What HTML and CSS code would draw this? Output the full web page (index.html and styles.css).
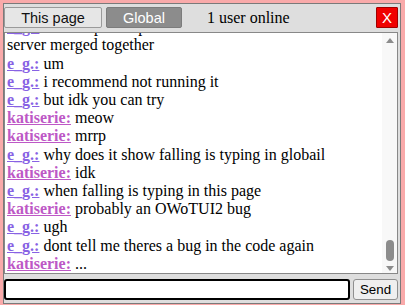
FILE: index.html
```html
<!DOCTYPE html>
<html lang="en">
<head>
    <meta charset="UTF-8">
    <title>Chat</title>
    <link rel="stylesheet" href="styles.css">
</head>
<body>

    <!-- Chat Window -->
    <div id="chat-window">
        <div id="chat-top-bar">
            <button class="tab-btn">This page</button>
            <button class="tab-btn active">Global</button>
            <span id="user-count">1 user online</span>
            <button id="chat-close">X</button>
        </div>
        <div id="chat-log">
            <div class="log-view">
                <div class="log-inner">
                    <div class="msg"><a class="nick nick-eg">e_g.:</a> mot of ip's scripts that he sent in the owot discored server merged together</div>
                    <div class="msg"><a class="nick nick-eg">e_g.:</a> um</div>
                    <div class="msg"><a class="nick nick-eg">e_g.:</a> i recommend not running it</div>
                    <div class="msg"><a class="nick nick-eg">e_g.:</a> but idk you can try</div>
                    <div class="msg"><a class="nick nick-kat">katiserie:</a> meow</div>
                    <div class="msg"><a class="nick nick-kat">katiserie:</a> mrrp</div>
                    <div class="msg"><a class="nick nick-eg">e_g.:</a> why does it show falling is typing in globail</div>
                    <div class="msg"><a class="nick nick-kat">katiserie:</a> idk</div>
                    <div class="msg"><a class="nick nick-eg">e_g.:</a> when falling is typing in this page</div>
                    <div class="msg"><a class="nick nick-kat">katiserie:</a> probably an OWoTUI2 bug</div>
                    <div class="msg"><a class="nick nick-eg">e_g.:</a> ugh</div>
                    <div class="msg"><a class="nick nick-eg">e_g.:</a> dont tell me theres a bug in the code again</div>
                    <div class="msg"><a class="nick nick-kat">katiserie:</a> ...</div>
                </div>
            </div>
            <div class="scrollbar">
                <span class="sb-arrow up"></span>
                <span class="sb-thumb"></span>
                <span class="sb-arrow down"></span>
            </div>
        </div>
        <div id="chat-input-row">
            <input id="chat-input" type="text">
            <button id="chat-send">Send</button>
        </div>
    </div>

</body>
</html>
```

FILE: styles.css
```css
:root {
    --bg-pink: #f9aaaa;
    --panel: #dedede;
    --border: #7a7a7a;
    --sb-gray: #8c8c8c;
    --nick-eg: #8862e4;
    --nick-kat: #bd58c6;
}
body {
    margin: 0;
    padding: 3px 4px 0 3px;
    background-color: var(--bg-pink);
    font-family: 'Liberation Serif', 'Times New Roman', serif;
    overflow: hidden;
}
/* --- Window --- */
#chat-window {
    height: 301px;
    box-sizing: border-box;
    border: 1px solid var(--border);
    background-color: var(--panel);
    padding: 3px 2px 2px 0;
    display: flex;
    flex-direction: column;
}
#chat-top-bar {
    display: flex;
    align-items: center;
    height: 21px;
    gap: 4px;
}
.tab-btn {
    height: 21px;
    padding: 0;
    font-family: 'Liberation Sans', Arial, sans-serif;
    font-size: 14.5px;
    color: #111;
    background-color: #e6e6e6;
    border: 1px solid #9a9a9a;
    border-radius: 2px;
    width: 98px;
}
.tab-btn.active {
    width: 76px;
    color: #fff;
    background-color: #8c8c8c;
    border-color: #7c7c7c;
}
#user-count {
    margin-left: 21px;
    font-size: 16px;
    color: #000;
}
#chat-close {
    margin-left: auto;
    width: 22px;
    height: 21px;
    padding: 0;
    font-family: 'Liberation Sans', Arial, sans-serif;
    font-size: 15px;
    color: #fff;
    background-color: #f00000;
    border: 1px solid #a00000;
    border-radius: 1px;
}

/* --- Log --- */
#chat-log {
    margin-top: 4px;
    height: 242px;
    box-sizing: border-box;
    background-color: #fff;
    border: 1px solid #888;
    display: flex;
}
.log-view {
    flex: 1;
    overflow: hidden;
    display: flex;
    flex-direction: column-reverse; /* newest message sits at the bottom */
}
.log-inner { padding: 0 0 0 2px; }
.msg {
    font-size: 16px;
    line-height: 18.2px;
    color: #000;
}
.nick {
    font-weight: bold;
    text-decoration: underline;
    cursor: pointer;
}
.nick-eg { color: var(--nick-eg); }
.nick-kat { color: var(--nick-kat); }

.scrollbar {
    width: 15px;
    background-color: #f8f8f8;
    display: flex;
    flex-direction: column;
    align-items: center;
    padding: 5px 0 2px 1px;
    box-sizing: border-box;
}
.sb-arrow {
    width: 0;
    height: 0;
    border-left: 4px solid transparent;
    border-right: 4px solid transparent;
}
.sb-arrow.up { border-bottom: 5px solid var(--sb-gray); }
.sb-arrow.down { border-top: 5px solid var(--sb-gray); }
.sb-thumb {
    margin-top: auto;
    margin-bottom: 5px;
    width: 8px;
    height: 21px;
    border-radius: 4px;
    background-color: var(--sb-gray);
}

/* --- Input --- */
#chat-input-row {
    display: flex;
    gap: 3px;
    margin-top: 5px;
    height: 21px;
}
#chat-input {
    flex: 1;
    margin: 0;
    min-width: 0;
    box-sizing: border-box;
    height: 21px;
    border: 2px solid #000;
    border-radius: 3px;
    background: #fff;
}
#chat-send {
    width: 45px;
    height: 21px;
    padding: 0;
    font-family: 'Liberation Sans', Arial, sans-serif;
    font-size: 13.33px;
    color: #000;
    background-color: #efefef;
    border: 1px solid #8f8f8f;
    border-radius: 3px;
}
```
